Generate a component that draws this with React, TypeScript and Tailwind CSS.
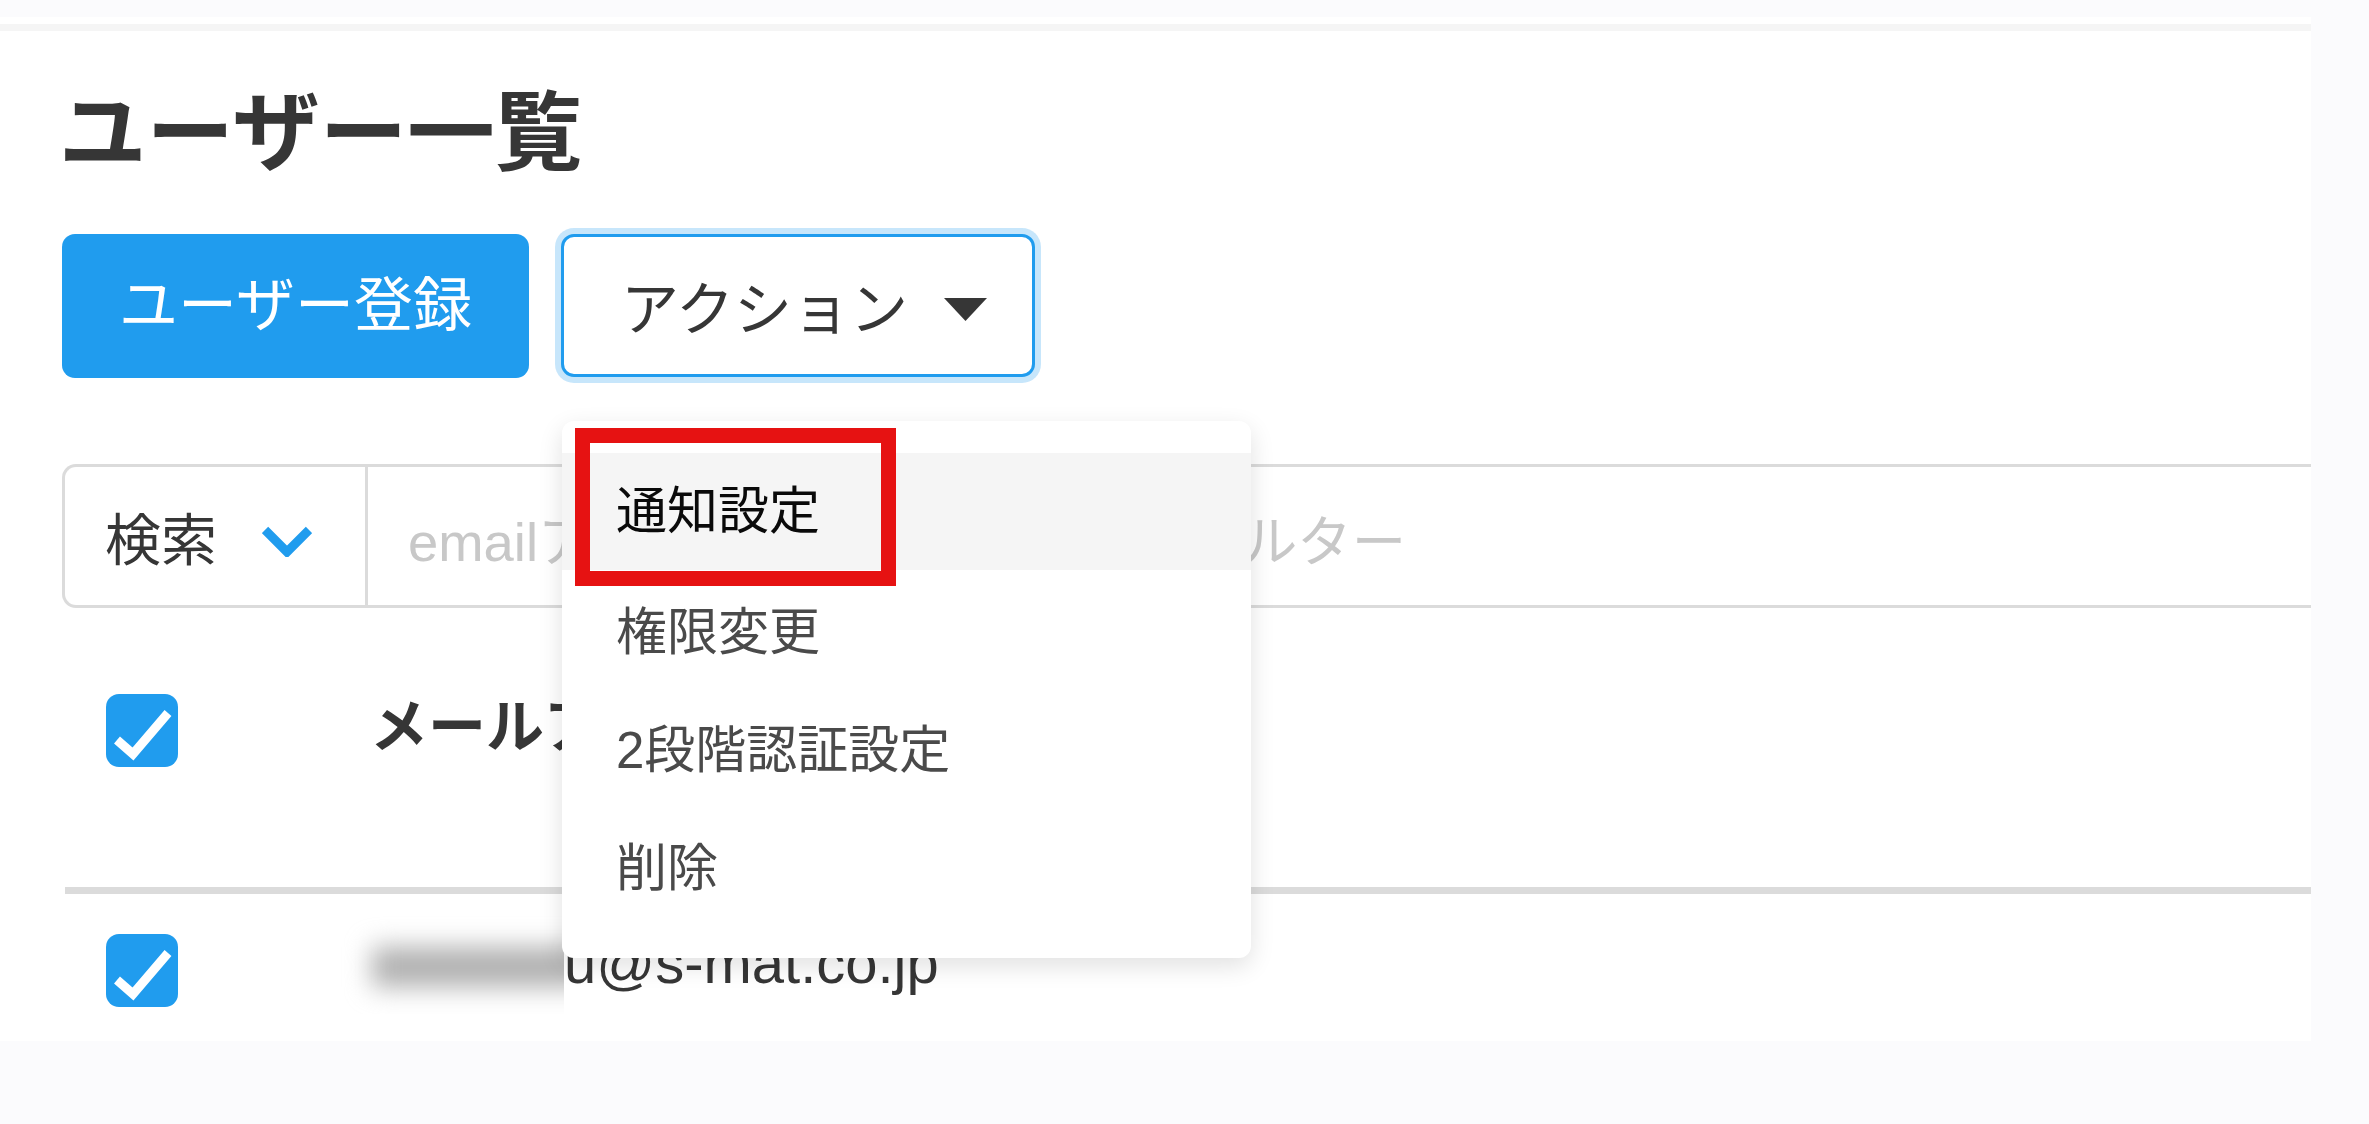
const jp = "font-['Liberation_Sans','Noto_Sans_CJK_JP',sans-serif]"

function Checkbox() {
  return (
    <div className="w-[72px] h-[73px] rounded-[13px] bg-[#209cee] shrink-0">
      <svg viewBox="0 0 72 73" className="w-full h-full">
        <polyline points="11,46 27,60 62,19" fill="none" stroke="#ffffff" strokeWidth="9" />
      </svg>
    </div>
  )
}

function ActionMenu() {
  return (
    <div className="absolute left-[1px] top-[187px] z-10 w-[689px] h-[537px] pt-[32px] rounded-[12px] bg-white shadow-[0_8px_24px_rgba(10,10,10,0.12)] text-[51px] leading-[117px] text-[#4a4a4a]">
      <div className="h-[117px] pl-[54px] bg-[#f5f5f5] text-[#0a0a0a]">通知設定</div>
      <div className="h-[118px] pl-[54px] pt-[4px]">権限変更</div>
      <div className="h-[118px] pl-[54px] pt-[4px]">2段階認証設定</div>
      <div className="h-[118px] pl-[54px] pt-[4px]">削除</div>
      {/* 注釈の赤枠 */}
      <div className="absolute left-[13px] top-[7px] w-[321px] h-[158px] border-[15px] border-[#e61212]" />
    </div>
  )
}

export default function App() {
  return (
    <div className={`w-[2369px] h-[1124px] pt-[17px] overflow-hidden bg-[#fbfbfd] text-[#363636] ${jp}`}>
      <div className="w-[2311px] h-[1024px] pt-[7px] bg-white overflow-hidden">
        <div className="h-[7px] bg-[#f5f5f5]" />

        <div className="pl-[62px]">
          <h1 className="mt-[58px] -ml-[3px] h-[90px] text-[87.5px] leading-[90px] font-bold">ユーザー一覧</h1>

          <div className="mt-[55px] flex items-start gap-[32px]">
            <button className="w-[467px] h-[144px] rounded-[13px] bg-[#209cee] text-white text-[59px]">
              ユーザー登録
            </button>
            <div className="relative">
              <button className="w-[474px] h-[143px] flex items-center pl-[57px] pt-[8px] rounded-[13px] bg-white border-[3px] border-[#209cee] shadow-[0_0_0_6px_rgba(32,156,238,0.25)] text-[58px]">
                アクション
                <svg viewBox="0 0 43 23" className="ml-[36px] w-[43px] h-[23px]">
                  <polygon points="0,0 43,0 21.5,23" fill="#363636" />
                </svg>
              </button>
              <ActionMenu />
            </div>
          </div>

          <div className="mt-[86px] h-[144px] flex border-[3px] border-r-0 border-[#dbdbdb] rounded-l-[14px]">
            <div className="w-[303px] flex items-center pl-[40px] pt-[10px] border-r-[3px] border-[#dbdbdb] text-[56px]">
              検索
              <svg viewBox="0 0 50 32" className="ml-[45px] w-[50px] h-[32px]">
                <polyline points="3,5 25,27 47,5" fill="none" stroke="#209cee" strokeWidth="9" />
              </svg>
            </div>
            <input
              className="flex-1 pl-[40px] pt-[14px] outline-none text-[54.4px] placeholder:text-[#c8c8c8]"
              placeholder="emailアドレス・ユーザー名でフィルター"
            />
          </div>

          <div className="mt-[86px] flex items-start">
            <div className="ml-[44px]">
              <Checkbox />
            </div>
            <div className="ml-[192px] -mt-[5px] text-[58px] leading-[76px] font-bold">メールアドレス</div>
          </div>

          <div className="mt-[120px] h-[7px] ml-[3px] bg-[#dbdbdb]" />

          <div className="mt-[40px] flex items-start">
            <div className="ml-[44px]">
              <Checkbox />
            </div>
            <div className="ml-[132px] -mt-[33px] flex items-center h-[113px]">
              {/* メールアドレスの前半はぼかし */}
              <div className="w-[254px] h-[113px] overflow-hidden">
                <div className="mt-[46px] ml-[62px] w-[240px] h-[40px] bg-[#b0b0b0] blur-[13px]" />
              </div>
              <span className="mt-[10px] text-[58px] leading-[76px]">u@s-mat.co.jp</span>
            </div>
          </div>
        </div>
      </div>
    </div>
  )
}
